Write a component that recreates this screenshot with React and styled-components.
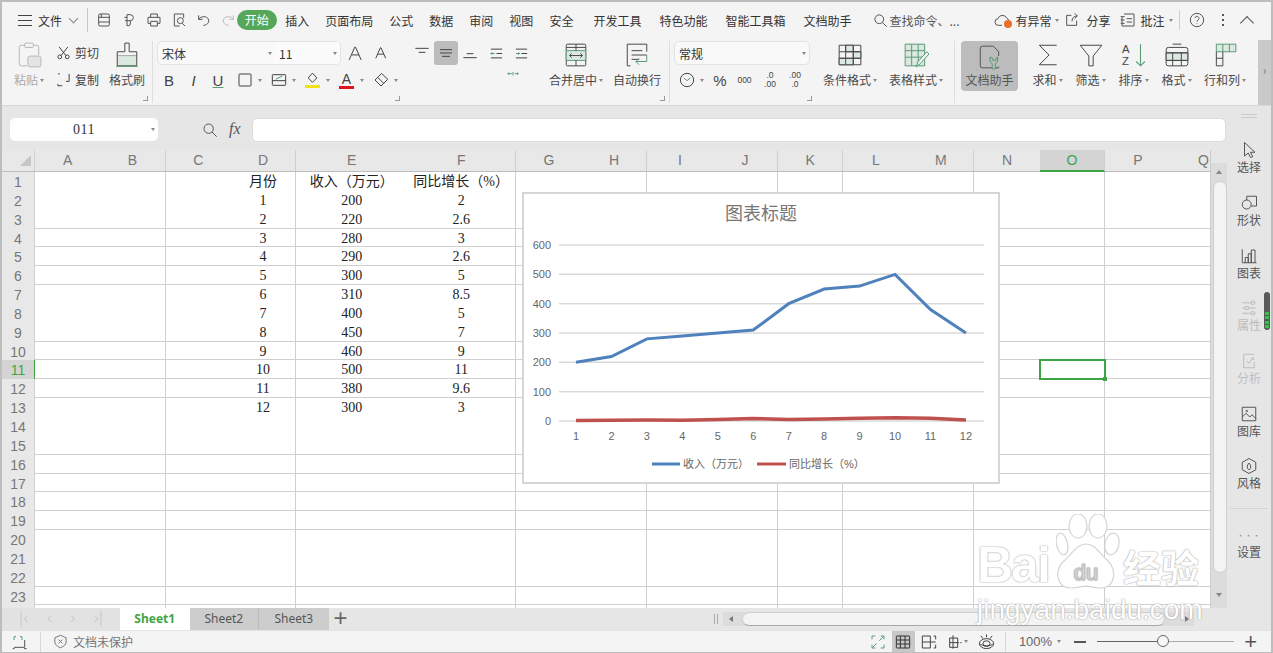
import React from 'react';
import styled, { createGlobalStyle } from 'styled-components';

const UI = '"Noto Sans CJK SC", "Noto Sans", sans-serif';
const CELL = '"Liberation Serif", "Noto Sans CJK SC", serif';
const LATIN = '"Liberation Sans", "Noto Sans CJK SC", sans-serif';
const GREEN = '#5a9b74';
const TINT = '#dce9e1';

const GlobalStyle = createGlobalStyle`
    html, body { margin: 0; padding: 0; overflow: hidden; background: #f4f4f4; }
    * { box-sizing: border-box; }
`;

// small drawings, all on a 24 box with 1px strokes
const icons = {
    save: <><rect x="4" y="3" width="16" height="18" rx="2" /><path d="M4 8h16M8 3v5M4 15h16" /></>,
    pdf: <path d="M9 21V4h5a4.5 4.5 0 0 1 0 9H6M5 8h4M14 13v5a3 3 0 0 1-5 2" />,
    print: <><path d="M7 8V3h10v5M7 17H3V8h18v9h-4" /><rect x="7" y="14" width="10" height="7" /></>,
    preview: <><path d="M19 9V3H5v18h8" /><circle cx="14" cy="13" r="4.5" /><path d="M17 17l4 4" /></>,
    undo: <path d="M4 5v6h6M4 11c3-5 13-6 15 1 1 5-4 8-8 8" />,
    redo: <path d="M20 5v6h-6M20 11c-3-5-13-6-15 1-1 5 4 8 8 8" />,
    search: <><circle cx="10" cy="10" r="7" /><path d="M15 15l7 7" /></>,
    cloud: <path d="M12 20H7a5 5 0 0 1-1-10 7 7 0 0 1 13-1 5 5 0 0 1 3 4" />,
    share: <><path d="M11 5H4v15h15v-7" /><path d="M12 14c0-5 3-8 8-8M16 2l4 4-4 4" /></>,
    note: <><path d="M6 3h15v18H3V7M1 7h6M1 12h6M1 17h6" /><path d="M10 10h8M10 15h8" /></>,
    help: <><circle cx="12" cy="12" r="10" /><path d="M9 9a3 3 0 1 1 4.5 3c-1 .6-1.5 1.200-1.500 2.500M12 17v1" /></>,
    cut: <><circle cx="6" cy="19" r="3" /><circle cx="18" cy="19" r="3" /><path d="M8 17L19 3M16 17L5 3" /></>,
    copy: <path d="M3 19V22h7M21 3v12h-5M3 3h3" />,
    border: <rect x="3" y="3" width="18" height="18" rx="1" />,
    fillBorder: <><rect x="2" y="4" width="20" height="16" rx="1" /><path d="M2 13h20" /><path d="M7 11l10-5" stroke={GREEN} /></>,
    bucket: <><path d="M12 2l8 9-8 8-8-8z" /></>,
    eraser: <><path d="M13 2l9 9-10 10-9-9zM7 8l9 9" /></>,
    alignTop: <path d="M2 5h20M7 11h10" />,
    alignMid: <path d="M3 7h18M3 12h18M6 17h12" />,
    alignBot: <path d="M7 13h10M2 19h20" />,
    indentL: <><path d="M3 5h18M12 12h9M3 19h18" /><path d="M9 12H3M5 10l-2 2 2 2" stroke={GREEN} /></>,
    indentR: <><path d="M3 5h18M12 12h9M3 19h18" /><path d="M3 12h6M7 10l2 2-2 2" stroke={GREEN} /></>,
    spread: <path d="M10 8H3M5 6l-2 2 2 2M15 8h6M19 6l2 2-2 2M12 5v6" stroke={GREEN} />,
    clock: <><circle cx="12" cy="12" r="10" /><path d="M7 9l5 4 5-4" stroke={GREEN} /></>,
    shield: <><path d="M12 2l9 4v7c0 4-4 7-9 9-5-2-9-5-9-9V6z" /><path d="M9 9l6 6M15 9l-6 6" /></>,
    expand: <path d="M3 8V3h5M16 3h5v5M21 16v5h-5M8 21H3v-5M14 10l6-6M10 14l-6 6" />,
    corner: <><path d="M3 9V4h3M12 4h3v5" stroke={GREEN} /><path d="M19 9v11H3M1 22h3M18 22h4" /></>,
    table: <><rect x="2" y="3" width="20" height="18" rx="1" /><path d="M2 9h20M2 15h20M8 3v18M15 3v18" /></>,
    split: <path d="M2 3h12M2 12h20M2 21h12M19 3h3v5M19 21h3v-5M2 3v18M14 3v18" />,
    page: <path d="M4 6h12v14H4zM4 13h12M9 2v20M16 13h2M20 13h2" />,
    eye: <><ellipse cx="12" cy="15" rx="10" ry="7" /><ellipse cx="12" cy="15" rx="5" ry="4" /><path d="M12 2v4M4 4l3 4M20 4l-3 4M2 15c4 4 16 4 20 0" /></>,
    cursor: <path d="M6 2v18l5-4 3 6 3-1-3-6h6z" />,
    shapes: <><circle cx="9" cy="14" r="6" /><path d="M9 8V3h13v13h-7" /></>,
    bars: <path d="M3 3v18h19M7 21v-7h4v7M11 21V9h4v12M15 21V4h5v17" />,
    sliders: <path d="M3 5h12M19 5h2M3 12h4M11 12h10M3 19h12M19 19h2M15 3h4v4h-4zM7 10h4v4H7zM15 17h4v4h-4z" />,
    analyse: <path d="M5 3h14M5 3v18h14v-7M9 12l3 3 5-7M15 8h3v3" />,
    gallery: <><rect x="3" y="3" width="18" height="18" /><path d="M3 16l5-5 5 5 3-3 5 5" /><circle cx="9" cy="8" r="1" /></>,
    style: <><path d="M12 2l9 5v10l-9 5-9-5V7z" /><path d="M12 8c3 3 3 8 0 9-3-1-3-6 0-9z" /></>,
    grow: <path d="M3 21L11 3h1l8 18M7 14h10" />,
    merge: <><rect x="3" y="2" width="18" height="20" rx="1" /><rect x="3" y="8" width="18" height="9" fill={TINT} stroke={GREEN} /><path d="M3 5h18M12 2v6M12 17v5M6 12.500h12M8 10.500l-2 2 2 2M16 10.500l2 2-2 2" /></>,
    wrap: <><path d="M3 2h18v7M3 22h3M3 2v20" /><path d="M7 8h10M7 12h14M7 16h7" /><path d="M21 12v6H11M14 15l-3 3 3 3" stroke={GREEN} /></>,
    cond: <><rect x="2" y="3" width="20" height="18" /><rect x="8" y="3" width="7" height="6" fill={TINT} /><rect x="15" y="9" width="7" height="6" fill={TINT} /><rect x="2" y="15" width="13" height="6" fill={TINT} /><path d="M2 9h20M2 15h20M8 3v18M15 3v18" /></>,
    tstyle: <><g stroke={GREEN}><rect x="2" y="2" width="18" height="20" fill={TINT} /><path d="M2 8h18M2 14h18M8 2v20M14 2v20" /></g><path d="M12 23l2-5 8-9 2 2-8 9z" fill="#f4f4f4" stroke={GREEN} /></>,
    helper: <><path d="M5 2h10l5 5v4M20 21v1H5a2 2 0 0 1-2-2V4a2 2 0 0 1 2-2" /><path d="M12 12v3a3 3 0 0 0 2 3v5h3v-5a3 3 0 0 0 2-3v-3l-1.500 1v2h-3v-2z" stroke={GREEN} fill="#bbb" /></>,
    sum: <path d="M20 3H4l9 9-9 9h16" />,
    funnel: <path d="M2 3h20l-8 10v9h-4v-9z" />,
    format: <><path d="M8 2h8" /><rect x="2" y="5" width="20" height="17" rx="2" /><rect x="2" y="10" width="20" height="7" fill={TINT} /><path d="M2 10h20M2 17h20M8 10v12M16 10v12" /></>,
    rowcol: <><g stroke={GREEN}><rect x="4" y="2" width="18" height="7" fill={TINT} /><path d="M10 2v7M16 2v7" /></g><path d="M4 9v13h6V9M4 15h6" /></>,
};

const Ico = ({ name, s = 16, c }) => (
    <IconSvg width={s} height={s} viewBox="0 0 24 24" $c={c}>{icons[name]}</IconSvg>
);

const ribbonLeftSmall = [
    { n: 'cut', t: '剪切' },
    { n: 'copy', t: '复制' },
];

const fontTools = [
    { n: 'border' },
    { n: 'fillBorder' },
    { n: 'bucket', bar: '#f2e21a' },
    { letter: 'A', bar: '#e0141c' },
    { n: 'eraser' },
];

const sideItems = [
    { n: 'cursor', t: '选择' },
    { n: 'shapes', t: '形状' },
    { n: 'bars', t: '图表' },
    { n: 'sliders', t: '属性', off: true },
    { n: 'analyse', t: '分析', off: true },
    { n: 'gallery', t: '图库' },
    { n: 'style', t: '风格' },
];

const columns = [
    ['A', 65.3], ['B', 65.3, 1], ['C', 65.3], ['D', 65.3, 1], ['E', 111], ['F', 109, 1],
    ['G', 65.5], ['H', 65.5, 1], ['I', 65.5], ['J', 65.5, 1], ['K', 65, 1], ['L', 65.5],
    ['M', 65.5, 1], ['N', 65.5], ['O', 65.5, 1], ['P', 65.5], ['Q', 65.5],
];

const ruledRows = [3, 4, 5, 6, 9, 10, 11, 12, 15, 16, 17, 18, 19, 22, 23, 24];

const tableData = [
    ['月份', '收入（万元）', '同比增长（%）'],
    [1, 200, 2], [2, 220, 2.6], [3, 280, 3], [4, 290, 2.6], [5, 300, 5], [6, 310, 8.5],
    [7, 400, 5], [8, 450, 7], [9, 460, 9], [10, 500, 11], [11, 380, 9.6], [12, 300, 3],
];

const chartX = (i) => 576 + i * 35.45;
const chartY = (v) => 421 - v * 0.2933;
const seriesPoints = (col) =>
    tableData.slice(1).map((r, i) => `${chartX(i)},${chartY(r[col])}`).join(' ');

function Chart() {
    return (
        <ChartBox>
            <svg width="474" height="288" viewBox="524 194 474 288">
                <ChartTitle x="761" y="220" textAnchor="middle">图表标题</ChartTitle>
                {[600, 500, 400, 300, 200, 100, 0].map((v) => (
                    <g key={v}>
                        <line x1="559" x2="984" y1={chartY(v)} y2={chartY(v)} stroke="#d9d9d9" strokeWidth="1.500" />
                        <AxisText x="551" y={chartY(v) + 4} textAnchor="end">{v}</AxisText>
                    </g>
                ))}
                {tableData.slice(1).map((r, i) => (
                    <AxisText key={i} x={chartX(i)} y="440" textAnchor="middle">{r[0]}</AxisText>
                ))}
                <polyline points={seriesPoints(1)} fill="none" stroke="#4f81bd" strokeWidth="3" />
                <polyline points={seriesPoints(2)} fill="none" stroke="#c0504d" strokeWidth="3.500" />
                <line x1="652" x2="680" y1="464" y2="464" stroke="#4f81bd" strokeWidth="3" />
                <AxisText x="683" y="468">收入（万元）</AxisText>
                <line x1="757" x2="786" y1="464" y2="464" stroke="#c0504d" strokeWidth="3" />
                <AxisText x="789" y="468">同比增长（%）</AxisText>
            </svg>
        </ChartBox>
    );
}

function Watermark() {
    return (
        <WatermarkBox>
            <WatermarkTop>
                <WatermarkBai>Bai</WatermarkBai>
                <svg width="70" height="76" viewBox="0 0 70 76">
                    <g fill="#fff" stroke="#d4d4d4" strokeWidth="1.200">
                        <ellipse cx="22" cy="12" rx="9" ry="12" />
                        <ellipse cx="42" cy="12" rx="9" ry="12" />
                        <ellipse cx="6" cy="30" rx="5.500" ry="11" transform="rotate(-12 6 30)" />
                        <ellipse cx="56" cy="30" rx="7" ry="11" transform="rotate(12 56 30)" />
                        <path d="M30 30c9 0 14 10 22 17 9 8 8 27-8 27-7 0-11-2-14-2s-8 2-15 2C0 74-2 56 8 47c8-7 13-17 22-17z" />
                    </g>
                    <WatermarkDu x="30" y="66" textAnchor="middle">du</WatermarkDu>
                </svg>
                <WatermarkCn>经验</WatermarkCn>
            </WatermarkTop>
            <WatermarkUrl>jingyan.baidu.com</WatermarkUrl>
        </WatermarkBox>
    );
}

function App() {
    return (
        <Page>
            <GlobalStyle />

            <TopBar>
                <Burger />
                <FileLabel>文件</FileLabel>
                <ChevronDown />
                <TopDivider />
                <QuickTools>
                    {['save', 'pdf', 'print', 'preview', 'undo'].map((n) => (
                        <QuickBtn key={n}><Ico name={n} /></QuickBtn>
                    ))}
                    <QuickBtn $dim><Ico name="redo" /></QuickBtn>
                </QuickTools>
                <ActiveTab>开始</ActiveTab>
                <TabGroup>
                    {['插入', '页面布局', '公式', '数据', '审阅', '视图', '安全'].map((t) => <span key={t}>{t}</span>)}
                </TabGroup>
                <TabGroup $wide>
                    {['开发工具', '特色功能', '智能工具箱', '文档助手'].map((t) => <span key={t}>{t}</span>)}
                </TabGroup>
                <SearchBlock>
                    <Ico name="search" s={15} />
                    <span>查找命令、...</span>
                </SearchBlock>
                <TopRight>
                    <CloudWrap>
                        <Ico name="cloud" s={16} />
                        <CloudDot />
                    </CloudWrap>
                    <TopText $ml={5}>有异常</TopText>
                    <Caret $ml={4} />
                    <TopIcon $ml={5}><Ico name="share" /></TopIcon>
                    <TopText $ml={6}>分享</TopText>
                    <TopIcon $ml={10}><Ico name="note" /></TopIcon>
                    <TopText $ml={4}>批注</TopText>
                    <Caret $ml={4} />
                    <TopRule />
                    <TopIcon $ml={9}><Ico name="help" /></TopIcon>
                    <Dots />
                    <ChevronUp />
                </TopRight>
            </TopBar>

            <Ribbon>
                <RibbonGroup $w={151} $pl={9} $rule>
                    <BigBtn $w={36} $off>
                        <PasteIcon />
                        <BigLabel>粘贴<Caret /></BigLabel>
                    </BigBtn>
                    <SmallCol>
                        {ribbonLeftSmall.map((b) => (
                            <SmallBtn key={b.t}><Ico name={b.n} s={15} />{b.t}</SmallBtn>
                        ))}
                    </SmallCol>
                    <BigBtn $w={46}>
                        <BrushIcon />
                        <BigLabel>格式刷</BigLabel>
                    </BigBtn>
                    <Launcher />
                </RibbonGroup>

                <RibbonGroup $w={251} $pl={4} $stack>
                    <ToolRow>
                        <SelectBox $w={184}>
                            <SelectPart $grow>宋体<Caret /></SelectPart>
                            <SelectPart $light $w={65}>11<Caret /></SelectPart>
                        </SelectBox>
                        <GlyphBtn $w={25} $ml={2}><Ico name="grow" s={17} /></GlyphBtn>
                        <GlyphBtn $w={25}><Ico name="grow" s={14} /></GlyphBtn>
                    </ToolRow>
                    <ToolRow $second>
                        <LetterBtn $w={24}>B</LetterBtn>
                        <LetterBtn $w={25} $italic>I</LetterBtn>
                        <LetterBtn $w={24} $under>U</LetterBtn>
                        <Spacer $w={2} />
                        {fontTools.map((t, i) => (
                            <GlyphBtn key={i} $w={34} $gap={3}>
                                <BarIcon>
                                    {t.letter ? <BarLetter>{t.letter}</BarLetter> : <Ico name={t.n} s={t.bar ? 13 : 16} />}
                                    {t.bar && <ColorBar $c={t.bar} />}
                                </BarIcon>
                                <Caret />
                            </GlyphBtn>
                        ))}
                    </ToolRow>
                    <Launcher />
                </RibbonGroup>

                <RibbonGroup $w={266} $pl={6} $rule>
                    <AlignBlock>
                        <ToolRow>
                            <GlyphBtn $w={24}><Ico name="alignTop" /></GlyphBtn>
                            <GlyphBtn $w={24} $on><Ico name="alignMid" /></GlyphBtn>
                            <GlyphBtn $w={24}><Ico name="alignBot" /></GlyphBtn>
                            <Spacer $w={2} />
                            <GlyphBtn $w={25}><Ico name="indentL" s={15} /></GlyphBtn>
                            <GlyphBtn $w={25}><Ico name="indentR" s={15} /></GlyphBtn>
                        </ToolRow>
                        <SpreadRow><Ico name="spread" s={14} /></SpreadRow>
                    </AlignBlock>
                    <BigBtn $w={66} $ml={8}>
                        <Ico name="merge" s={26} />
                        <BigLabel>合并居中<Caret /></BigLabel>
                    </BigBtn>
                    <BigBtn $w={52} $ml={2}>
                        <Ico name="wrap" s={26} />
                        <BigLabel>自动换行</BigLabel>
                    </BigBtn>
                    <Launcher />
                </RibbonGroup>

                <RibbonGroup $w={146} $pl={4} $stack>
                    <ToolRow>
                        <SelectBox $w={136}>
                            <SelectPart $grow>常规<Caret /></SelectPart>
                        </SelectBox>
                    </ToolRow>
                    <ToolRow $second>
                        <GlyphBtn $w={34} $gap={3}><Ico name="clock" s={16} /><Caret /></GlyphBtn>
                        <LetterBtn $w={24}>%</LetterBtn>
                        <TinyBtn $w={25}>000</TinyBtn>
                        <TinyBtn $w={26}>.0<br />.00</TinyBtn>
                        <TinyBtn $w={24}>.00<br />.0</TinyBtn>
                    </ToolRow>
                    <Launcher />
                </RibbonGroup>

                <RibbonGroup $w={139} $pl={1} $rule>
                    <BigBtn $w={66}>
                        <Ico name="cond" s={26} />
                        <BigLabel>条件格式<Caret /></BigLabel>
                    </BigBtn>
                    <BigBtn $w={66}>
                        <Ico name="tstyle" s={26} />
                        <BigLabel>表格样式<Caret /></BigLabel>
                    </BigBtn>
                </RibbonGroup>

                <HelperBtn>
                    <Ico name="helper" s={26} />
                    <BigLabel>文档助手</BigLabel>
                </HelperBtn>

                <BigBtn $w={43} $ml={8}>
                    <Ico name="sum" s={26} />
                    <BigLabel>求和<Caret /></BigLabel>
                </BigBtn>
                <BigBtn $w={43}>
                    <Ico name="funnel" s={26} />
                    <BigLabel>筛选<Caret /></BigLabel>
                </BigBtn>
                <BigBtn $w={43}>
                    <SortIcon width="26" height="26" viewBox="0 0 24 24">
                        <text x="1" y="10">A</text>
                        <text x="1" y="21">Z</text>
                        <path d="M18 2v20M14 18l4 4 4-4" stroke={GREEN} fill="none" />
                    </SortIcon>
                    <BigLabel>排序<Caret /></BigLabel>
                </BigBtn>
                <BigBtn $w={43}>
                    <Ico name="format" s={26} />
                    <BigLabel>格式<Caret /></BigLabel>
                </BigBtn>
                <BigBtn $w={54}>
                    <Ico name="rowcol" s={26} />
                    <BigLabel>行和列<Caret /></BigLabel>
                </BigBtn>
                <RibbonMore>›</RibbonMore>
            </Ribbon>

            <Body>
                <LeftPane>
                    <FormulaBar>
                        <NameBox>011<NameCaret /></NameBox>
                        <FormulaIcon><Ico name="search" s={16} /></FormulaIcon>
                        <FxLabel>fx</FxLabel>
                        <FormulaInput />
                    </FormulaBar>

                    <Middle>
                        <SheetArea>
                            <HeadRow>
                                <Corner><CornerMark /></Corner>
                                {columns.map(([name, w, line]) => (
                                    <ColHead key={name} $w={w} $line={line} $active={name === 'O'}>{name}</ColHead>
                                ))}
                            </HeadRow>
                            <SheetBody>
                                {Array.from({ length: 24 }, (_, r) => (
                                    <SheetRow key={r}>
                                        <RowHead $active={r === 10}>{r < 23 ? r + 1 : ''}</RowHead>
                                        {columns.map(([name, w, line], c) => (
                                            <Cell
                                                key={name}
                                                $w={w}
                                                $line={line}
                                                $rule={ruledRows.includes(r + 1)}
                                                $selected={name === 'O' && r === 10}
                                            >
                                                {c >= 3 && c <= 5 && tableData[r] ? tableData[r][c - 3] : ''}
                                            </Cell>
                                        ))}
                                    </SheetRow>
                                ))}
                            </SheetBody>
                        </SheetArea>
                        <VScroll>
                            <ScrollArrow $up />
                            <VThumb />
                            <ScrollArrow />
                        </VScroll>
                    </Middle>

                    <TabBar>
                        <TabNav>
                            <span>|‹</span><span>‹</span><span>›</span><span>›|</span>
                        </TabNav>
                        <SheetTab $active>Sheet1</SheetTab>
                        <SheetTab>Sheet2</SheetTab>
                        <SheetTab $last>Sheet3</SheetTab>
                        <AddTab>+</AddTab>
                        <HScrollGrip />
                        <HScroll>
                            <HArrow $left />
                            <HThumb />
                            <HArrow />
                        </HScroll>
                    </TabBar>
                </LeftPane>

                <SidePane>
                    <SideGrip />
                    {sideItems.map((s) => (
                        <SideItem key={s.t} $off={s.off}>
                            <Ico name={s.n} s={18} />
                            <span>{s.t}</span>
                        </SideItem>
                    ))}
                    <SideRule />
                    <SideItem>
                        <SideDots>•••</SideDots>
                        <span>设置</span>
                    </SideItem>
                </SidePane>
            </Body>

            <StatusBar>
                <StatusIcon $ml={10}><Ico name="corner" s={16} c="#555" /></StatusIcon>
                <StatusRule $ml={12} />
                <StatusIcon $ml={12}><Ico name="shield" s={15} c="#777" /></StatusIcon>
                <StatusText>文档未保护</StatusText>
                <StatusRight>
                    <StatusIcon><Ico name="expand" s={16} c={GREEN} /></StatusIcon>
                    <ViewBtn><Ico name="table" s={16} /></ViewBtn>
                    <StatusIcon $ml={6}><Ico name="split" s={16} /></StatusIcon>
                    <StatusIcon $ml={10}><Ico name="page" s={16} /></StatusIcon>
                    <Caret $ml={1} />
                    <StatusIcon $ml={10}><Ico name="eye" s={17} /></StatusIcon>
                    <StatusRule $ml={10} />
                    <ZoomText>100%</ZoomText>
                    <Caret $ml={5} />
                    <ZoomMinus />
                    <ZoomSlider><ZoomKnob /></ZoomSlider>
                    <ZoomPlus>+</ZoomPlus>
                </StatusRight>
            </StatusBar>

            <Chart />
            <SideMeter>
                {[0, 1, 2, 3].map((i) => <MeterBar key={i} />)}
            </SideMeter>
            <Watermark />
        </Page>
    );
}

export default App;

const PasteIcon = () => (
    <IconSvg width="26" height="26" viewBox="0 0 24 24" $c="#b8b8b8">
        <path d="M8 3H5a2 2 0 0 0-2 2v15a2 2 0 0 0 2 2h5M16 3h3a2 2 0 0 1 2 2v7" />
        <rect x="8" y="1" width="8" height="4" rx="1" />
        <rect x="11" y="13" width="12" height="10" rx="2" fill="#e4e4e4" />
    </IconSvg>
);

const BrushIcon = () => (
    <IconSvg width="26" height="26" viewBox="0 0 24 24">
        <path d="M10 1h4v8h7v4H3V9h7z" />
        <rect x="3" y="13" width="18" height="9" fill={TINT} stroke="none" />
        <path d="M3 13v9h18v-9" />
        <path d="M2 22.500h20" stroke={GREEN} />
    </IconSvg>
);

const Page = styled.div`
    position: relative;
    width: 1273px;
    height: 653px;
    overflow: hidden;
    display: flex;
    flex-direction: column;
    background: #f4f4f4;
    border-style: solid;
    border-color: #bdbdbd;
    border-width: 2px 2px 1px 2px;
    font-family: ${UI};
    font-size: 12px;
    color: #444;
`;

const IconSvg = styled.svg`
    flex-shrink: 0;
    fill: none;
    stroke: ${(p) => p.$c || 'currentColor'};
    stroke-width: 1;
    * { vector-effect: non-scaling-stroke; }
`;

const Caret = styled.i`
    display: inline-block;
    flex-shrink: 0;
    width: 0;
    height: 0;
    margin-left: ${(p) => p.$ml || 2}px;
    vertical-align: middle;
    border-left: 2.5px solid transparent;
    border-right: 2.5px solid transparent;
    border-top: 3px solid #888;
`;

const TopBar = styled.div`
    height: 36px;
    flex-shrink: 0;
    display: flex;
    align-items: center;
    padding-left: 16px;
    color: #333;
`;

const Burger = styled.div`
    width: 14px;
    height: 11px;
    border-top: 1px solid #444;
    border-bottom: 1px solid #444;
    position: relative;
    &::after {
        content: '';
        position: absolute;
        left: 0;
        right: 0;
        top: 4px;
        border-top: 1px solid #444;
    }
`;

const FileLabel = styled.span`
    margin-left: 6px;
    width: 24px;
`;

const ChevronDown = styled.i`
    width: 7px;
    height: 7px;
    margin: -4px 0 0 8px;
    border-right: 1px solid #888;
    border-bottom: 1px solid #888;
    transform: rotate(45deg);
`;

const ChevronUp = styled.i`
    width: 10px;
    height: 10px;
    margin: 5px 0 0 18px;
    border-left: 1px solid #555;
    border-top: 1px solid #555;
    transform: rotate(45deg);
`;

const TopDivider = styled.div`
    width: 1px;
    height: 24px;
    margin-left: 10px;
    background: #c8c8c8;
`;

const QuickTools = styled.div`
    display: flex;
    margin-left: 4px;
`;

const QuickBtn = styled.div`
    width: 24.800px;
    display: flex;
    justify-content: center;
    color: ${(p) => (p.$dim ? '#bbb' : '#555')};
`;

const ActiveTab = styled.div`
    width: 40px;
    height: 20px;
    margin-left: -4px;
    border-radius: 10px;
    background: #55a85a;
    color: #fff;
    text-align: center;
    line-height: 20px;
`;

const TabGroup = styled.div`
    display: flex;
    gap: ${(p) => (p.$wide ? 18 : 16)}px;
    margin-left: ${(p) => (p.$wide ? 20 : 8.500)}px;
    white-space: nowrap;
`;

const SearchBlock = styled.div`
    display: flex;
    align-items: center;
    gap: 1px;
    margin-left: 22px;
    width: 88px;
    white-space: nowrap;
    color: #555;
`;

const TopRight = styled.div`
    display: flex;
    align-items: center;
    margin-left: 33px;
`;

const CloudWrap = styled.div`
    position: relative;
    width: 16px;
    height: 16px;
    color: #555;
`;

const CloudDot = styled.i`
    position: absolute;
    right: -2px;
    bottom: 0;
    width: 8px;
    height: 8px;
    border-radius: 50%;
    background: #e8702a;
`;

const TopText = styled.span`
    margin-left: ${(p) => p.$ml}px;
    white-space: nowrap;
`;

const TopIcon = styled.div`
    display: flex;
    margin-left: ${(p) => p.$ml}px;
    color: #555;
`;

const TopRule = styled.div`
    width: 1px;
    height: 20px;
    margin-left: 6px;
    background: #d0d0d0;
`;

const Dots = styled.div`
    width: 2px;
    height: 2px;
    margin-left: 17px;
    background: #555;
    box-shadow: 0 -5px 0 #555, 0 5px 0 #555;
`;

const Ribbon = styled.div`
    height: 68px;
    flex-shrink: 0;
    display: flex;
    padding-top: 3px;
    background: #f4f4f4;
    border-bottom: 1px solid #d8d8d8;
`;

const RibbonGroup = styled.div`
    position: relative;
    flex-shrink: 0;
    width: ${(p) => p.$w}px;
    height: 62px;
    padding-left: ${(p) => p.$pl}px;
    display: flex;
    flex-direction: ${(p) => (p.$stack ? 'column' : 'row')};
    border-right: ${(p) => (p.$rule ? '1px solid #dedede' : 'none')};
`;

const BigBtn = styled.div`
    flex-shrink: 0;
    width: ${(p) => p.$w}px;
    height: 48px;
    margin-left: ${(p) => p.$ml || 0}px;
    padding-top: 1px;
    display: flex;
    flex-direction: column;
    align-items: center;
    justify-content: space-between;
    color: ${(p) => (p.$off ? '#aaa' : '#4a4a4a')};
`;

const BigLabel = styled.div`
    display: flex;
    align-items: center;
    line-height: 16px;
    padding-bottom: 1px;
    white-space: nowrap;
`;

const HelperBtn = styled(BigBtn)`
    width: 57px;
    height: 50px;
    margin-left: 6px;
    padding: 3px 0 2px;
    border-radius: 4px;
    background: #bcbcbc;
    color: #555;
`;

const SmallCol = styled.div`
    width: 48px;
    height: 48px;
    margin-left: 9px;
    display: flex;
    flex-direction: column;
    justify-content: space-between;
    padding: 3px 0 1px;
`;

const SmallBtn = styled.div`
    display: flex;
    align-items: center;
    gap: 4px;
    white-space: nowrap;
`;

const Launcher = styled.i`
    position: absolute;
    right: 4px;
    bottom: 2px;
    width: 5px;
    height: 5px;
    border-right: 1px solid #999;
    border-bottom: 1px solid #999;
`;

const ToolRow = styled.div`
    height: 24px;
    display: flex;
    align-items: center;
    margin-top: ${(p) => (p.$second ? 3 : 0)}px;
`;

const SelectBox = styled.div`
    width: ${(p) => p.$w}px;
    height: 24px;
    display: flex;
    border: 1px solid #e2e2e2;
    border-radius: 5px;
    background: #f9f9f9;
    overflow: hidden;
`;

const SelectPart = styled.div`
    flex: ${(p) => (p.$grow ? 1 : 'none')};
    width: ${(p) => (p.$w ? `${p.$w}px` : 'auto')};
    display: flex;
    align-items: center;
    justify-content: space-between;
    padding: 0 3px 0 4px;
    color: #333;
    background: ${(p) => (p.$light ? '#fbfbfb' : 'transparent')};
`;

const GlyphBtn = styled.div`
    flex-shrink: 0;
    width: ${(p) => p.$w}px;
    height: 24px;
    margin-left: ${(p) => p.$ml || 0}px;
    display: flex;
    align-items: center;
    justify-content: center;
    gap: ${(p) => p.$gap || 0}px;
    border-radius: 3px;
    background: ${(p) => (p.$on ? '#bcbcbc' : 'transparent')};
    color: #444;
`;

const LetterBtn = styled.div`
    flex-shrink: 0;
    width: ${(p) => p.$w}px;
    text-align: center;
    font-family: ${LATIN};
    font-size: 15px;
    font-style: ${(p) => (p.$italic ? 'italic' : 'normal')};
    color: #444;
    text-decoration: ${(p) => (p.$under ? `underline ${GREEN}` : 'none')};
`;

const TinyBtn = styled.div`
    flex-shrink: 0;
    width: ${(p) => p.$w}px;
    font-family: ${LATIN};
    font-size: 8.500px;
    line-height: 9px;
    text-align: center;
    color: #444;
`;

const BarIcon = styled.div`
    width: 16px;
    display: flex;
    flex-direction: column;
    align-items: center;
`;

const BarLetter = styled.span`
    font-family: ${LATIN};
    font-size: 14px;
    line-height: 14px;
`;

const ColorBar = styled.i`
    width: 15px;
    height: 3px;
    background: ${(p) => p.$c};
`;

const Spacer = styled.div`
    flex-shrink: 0;
    width: ${(p) => p.$w}px;
`;

const AlignBlock = styled.div`
    width: 125px;
    display: flex;
    flex-direction: column;
`;

const SpreadRow = styled.div`
    display: flex;
    justify-content: flex-end;
    padding: 4px 15px 0 0;
`;

const SortIcon = styled.svg`
    flex-shrink: 0;
    text {
        font-family: ${LATIN};
        font-size: 10.500px;
        fill: #444;
    }
`;

const RibbonMore = styled.div`
    width: 13px;
    height: 65px;
    margin: -1px 0 0 auto;
    background: #c9c9c9;
    color: #777;
    text-align: center;
    line-height: 60px;
`;

const Body = styled.div`
    height: 524px;
    flex-shrink: 0;
    display: flex;
    background: #e6e6e6;
`;

const LeftPane = styled.div`
    width: 1225px;
    display: flex;
    flex-direction: column;
`;

const FormulaBar = styled.div`
    height: 44px;
    flex-shrink: 0;
    display: flex;
    align-items: flex-start;
    padding: 12px 1px 0 8px;
`;

const NameBox = styled.div`
    position: relative;
    width: 148px;
    height: 23px;
    border-radius: 5px;
    background: #fff;
    text-align: center;
    line-height: 23px;
    font-family: ${CELL};
    font-size: 14px;
    letter-spacing: 0.500px;
    color: #333;
`;

const NameCaret = styled(Caret)`
    position: absolute;
    right: 3px;
    top: 10px;
`;

const FormulaIcon = styled.div`
    width: 16px;
    height: 23px;
    margin-left: 44px;
    display: flex;
    align-items: center;
    color: #555;
`;

const FxLabel = styled.div`
    width: 23px;
    margin-left: 11px;
    line-height: 22px;
    font-family: "Liberation Serif", serif;
    font-style: italic;
    font-size: 16px;
    color: #555;
`;

const FormulaInput = styled.div`
    flex: 1;
    height: 24px;
    border: 1px solid #ddd;
    border-radius: 5px;
    background: #fff;
`;

const Middle = styled.div`
    height: 458px;
    flex-shrink: 0;
    display: flex;
`;

const SheetArea = styled.div`
    width: 1209px;
    display: flex;
    flex-direction: column;
    overflow: hidden;
    border-right: 1px solid #ccc;
`;

const HeadRow = styled.div`
    height: 22px;
    flex-shrink: 0;
    display: flex;
    border-bottom: 1px solid #bdbdbd;
    background: #e8e8e8;
`;

const Corner = styled.div`
    width: 33px;
    flex-shrink: 0;
    padding: 5px 0 0 18px;
    border-right: 1px solid #d0d0d0;
`;

const CornerMark = styled.i`
    display: block;
    width: 0;
    height: 0;
    border-left: 11px solid transparent;
    border-bottom: 11px solid #c6c6c6;
`;

const ColHead = styled.div`
    flex-shrink: 0;
    width: ${(p) => p.$w}px;
    text-align: center;
    line-height: 20px;
    font-family: ${LATIN};
    font-size: 14px;
    color: ${(p) => (p.$active ? '#3fa544' : '#777')};
    background: ${(p) => (p.$active ? '#d4d4d4' : 'transparent')};
    border-right: ${(p) => (p.$line ? '1px solid #cfcfcf' : 'none')};
    box-shadow: ${(p) => (p.$active ? '0 1px 0 #3fa544, inset 0 -1px 0 #3fa544' : 'none')};
`;

const SheetBody = styled.div`
    flex: 1;
    min-height: 0;
    overflow: hidden;
    background: #fff;
`;

const SheetRow = styled.div`
    height: 18.850px;
    display: flex;
`;

const RowHead = styled.div`
    width: 33px;
    flex-shrink: 0;
    text-align: center;
    line-height: 20px;
    font-family: ${LATIN};
    font-size: 14px;
    color: ${(p) => (p.$active ? '#3fa544' : '#777')};
    background: ${(p) => (p.$active ? '#d4d4d4' : '#e8e8e8')};
    border-right: 1px solid ${(p) => (p.$active ? '#3fa544' : '#d0d0d0')};
`;

const Cell = styled.div`
    position: relative;
    flex-shrink: 0;
    width: ${(p) => p.$w}px;
    padding-top: 1px;
    text-align: center;
    line-height: 18px;
    font-family: ${CELL};
    font-size: 14px;
    color: #222;
    white-space: nowrap;
    border-right: ${(p) => (p.$line ? '1px solid #cfcfcf' : 'none')};
    border-bottom: ${(p) => (p.$rule ? '1px solid #cfcfcf' : 'none')};
    ${(p) => p.$selected && `
        outline: 2px solid #3fa544;
        outline-offset: -1px;
        z-index: 1;
        &::after {
            content: '';
            position: absolute;
            right: -3px;
            bottom: -3px;
            width: 4px;
            height: 4px;
            background: #3fa544;
        }
    `}
`;

const VScroll = styled.div`
    width: 16px;
    margin-top: 13px;
    display: flex;
    flex-direction: column;
    align-items: flex-end;
    background: #dcdcdc;
`;

const VThumb = styled.div`
    width: 14px;
    height: 392px;
    margin-top: 7px;
    border: 1px solid #cfcfcf;
    border-radius: 7px;
    background: #f3f3f3;
`;

const ScrollArrow = styled.i`
    align-self: center;
    width: 0;
    height: 0;
    margin-top: ${(p) => (p.$up ? 7 : 20)}px;
    border-left: 3px solid transparent;
    border-right: 3px solid transparent;
    border-bottom: ${(p) => (p.$up ? '4px solid #888' : 'none')};
    border-top: ${(p) => (p.$up ? 'none' : '4px solid #888')};
`;

const TabBar = styled.div`
    height: 22px;
    flex-shrink: 0;
    display: flex;
    align-items: stretch;
    background: #e6e6e6;
`;

const TabNav = styled.div`
    width: 118px;
    display: flex;
    justify-content: space-around;
    padding: 0 8px;
    background: #e2e2e2;
    color: #cfcfcf;
    font-family: ${LATIN};
    font-size: 16px;
    line-height: 20px;
`;

const SheetTab = styled.div`
    width: 69.500px;
    text-align: center;
    line-height: 21px;
    font-family: "Noto Sans", ${UI};
    font-weight: ${(p) => (p.$active ? 700 : 400)};
    color: ${(p) => (p.$active ? '#3fa544' : '#555')};
    background: ${(p) => (p.$active ? '#fff' : '#cdcdcd')};
    border-right: ${(p) => (p.$last || p.$active ? 'none' : '1px solid #bbb')};
`;

const AddTab = styled.div`
    width: 24px;
    text-align: center;
    font-family: ${LATIN};
    font-size: 24px;
    line-height: 20px;
    color: #666;
`;

const HScrollGrip = styled.i`
    width: 4px;
    height: 10px;
    margin: 6px 0 0 361px;
    border-left: 1px solid #aaa;
    border-right: 1px solid #aaa;
`;

const HScroll = styled.div`
    width: 471px;
    height: 14px;
    margin: 4px 0 0 5px;
    display: flex;
    align-items: center;
    background: #dcdcdc;
`;

const HThumb = styled.div`
    width: 423px;
    height: 14px;
    margin: 0 20px 0 9px;
    border: 1px solid #cfcfcf;
    border-bottom-color: #aaa;
    border-radius: 7px;
    background: #f3f3f3;
`;

const HArrow = styled.i`
    width: 0;
    height: 0;
    margin-left: ${(p) => (p.$left ? 6 : 0)}px;
    border-top: 3px solid transparent;
    border-bottom: 3px solid transparent;
    border-right: ${(p) => (p.$left ? '4px solid #777' : 'none')};
    border-left: ${(p) => (p.$left ? 'none' : '4px solid #777')};
`;

const SidePane = styled.div`
    width: 44px;
    display: flex;
    flex-direction: column;
    align-items: center;
    padding-top: 8px;
`;

const SideGrip = styled.i`
    width: 16px;
    height: 4px;
    margin-bottom: 14px;
    border-top: 1px solid #ccc;
    border-bottom: 1px solid #ccc;
`;

const SideItem = styled.div`
    height: 52.700px;
    flex-shrink: 0;
    display: flex;
    flex-direction: column;
    align-items: center;
    justify-content: center;
    line-height: 16px;
    color: ${(p) => (p.$off ? '#bdbdbd' : '#555')};
`;

const SideRule = styled.div`
    width: 38px;
    height: 1px;
    margin: 7px 0 8px;
    background: #d4d4d4;
`;

const SideDots = styled.span`
    font-size: 7px;
    line-height: 18px;
    color: #888;
    letter-spacing: 1px;
`;

const SideMeter = styled.div`
    position: absolute;
    left: 1262px;
    top: 290px;
    width: 6px;
    height: 38px;
    padding: 0 1px 2px;
    display: flex;
    flex-direction: column;
    justify-content: flex-end;
    gap: 1.500px;
    border-radius: 3px;
    background: #5a5a5a;
`;

const MeterBar = styled.i`
    height: 3px;
    background: #35c24a;
`;

const StatusBar = styled.div`
    flex: 1;
    min-height: 0;
    display: flex;
    align-items: center;
    background: #f4f4f4;
    border-top: 1px solid #e2e2e2;
`;

const StatusIcon = styled.div`
    display: flex;
    margin-left: ${(p) => p.$ml || 0}px;
    color: #444;
`;

const StatusRule = styled.div`
    width: 1px;
    height: 20px;
    margin-left: ${(p) => p.$ml}px;
    background: #d8d8d8;
`;

const StatusText = styled.span`
    margin-left: 5px;
    color: #777;
`;

const StatusRight = styled.div`
    height: 100%;
    margin-left: auto;
    padding-right: 14px;
    display: flex;
    align-items: center;
`;

const ViewBtn = styled.div`
    width: 23px;
    height: 100%;
    margin-left: 6px;
    display: flex;
    align-items: center;
    justify-content: center;
    background: #c8c8c8;
    color: #333;
`;

const ZoomText = styled.span`
    margin-left: 13px;
    font-family: ${LATIN};
    font-size: 13px;
    color: #666;
`;

const ZoomMinus = styled.i`
    width: 12px;
    height: 2px;
    margin-left: 13px;
    background: #555;
`;

const ZoomSlider = styled.div`
    position: relative;
    width: 137px;
    height: 1px;
    margin-left: 11px;
    background: linear-gradient(to right, #666 48%, #aaa 48%);
`;

const ZoomKnob = styled.i`
    position: absolute;
    left: 60px;
    top: -6px;
    width: 12px;
    height: 12px;
    border: 1px solid #666;
    border-radius: 50%;
    background: #f7f7f7;
`;

const ZoomPlus = styled.span`
    margin-left: 10px;
    font-family: ${LATIN};
    font-size: 22px;
    line-height: 20px;
    color: #555;
`;

const ChartBox = styled.div`
    position: absolute;
    left: 520px;
    top: 190px;
    width: 478px;
    height: 292px;
    border: 2px solid #d6d6d6;
    background: #fff;
    svg { display: block; }
`;

const ChartTitle = styled.text`
    font-family: ${UI};
    font-size: 18px;
    fill: #777;
`;

const AxisText = styled.text`
    font-family: ${LATIN};
    font-size: 11px;
    fill: #666;
`;

const WatermarkBox = styled.div`
    position: absolute;
    left: 975px;
    top: 512px;
    display: flex;
    flex-direction: column;
    color: #fff;
    pointer-events: none;
    text-shadow: 0 0 1px #9a9a9a, 0 0 2px #b8b8b8;
`;

const WatermarkTop = styled.div`
    display: flex;
    align-items: flex-end;
    height: 76px;
`;

const WatermarkBai = styled.span`
    width: 79px;
    font-family: ${LATIN};
    font-size: 50px;
    line-height: 50px;
    font-weight: 700;
    letter-spacing: -2px;
`;

const WatermarkDu = styled.text`
    font-family: ${LATIN};
    font-size: 22px;
    fill: #fff;
    stroke: #c8c8c8;
    stroke-width: 0.600;
`;

const WatermarkCn = styled.span`
    margin-left: -3px;
    font-family: ${UI};
    font-size: 38px;
    line-height: 48px;
    font-weight: 700;
`;

const WatermarkUrl = styled.span`
    margin-top: 3px;
    font-family: ${LATIN};
    font-size: 28px;
    line-height: 34px;
    white-space: nowrap;
`;
